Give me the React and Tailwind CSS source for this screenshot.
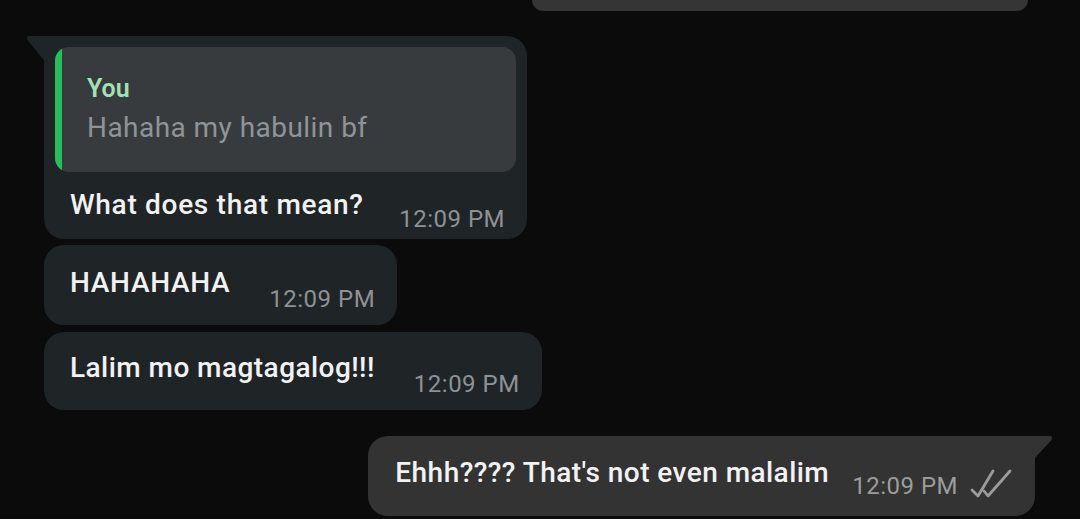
import React from 'react';

const font = { fontFamily: 'Roboto, "Noto Sans", sans-serif' };

const DoubleTick = () => (
  <svg width="42" height="30" viewBox="0 0 42 30" fill="none" className="ml-[12px] mb-[2px]">
    <path d="M2 22 L8 28 L23 3" stroke="#9c9c9c" strokeWidth="2.8" strokeLinecap="round" strokeLinejoin="round" />
    <path d="M14 23 L18 28 L40 3" stroke="#9c9c9c" strokeWidth="2.8" strokeLinecap="round" strokeLinejoin="round" />
  </svg>
);

// tail pointing up-left for incoming bubbles
const InTail = () => (
  <svg width="20" height="28" viewBox="0 0 20 28" className="absolute -left-[18px] top-0">
    <path d="M3 0 H20 V27 L1.5 4 Q0 0 3 0 Z" fill="#1f2427" />
  </svg>
);

const OutTail = () => (
  <svg width="20" height="28" viewBox="0 0 20 28" className="absolute -right-[18px] top-0">
    <path d="M17 0 H0 V24 L18.5 4 Q20 0 17 0 Z" fill="#333333" />
  </svg>
);

const Time = ({ out }) => (
  <span className={`text-[24px] leading-[28px] tracking-[0.5px] whitespace-nowrap ${out ? 'text-[#9c9c9c]' : 'text-[#8d9295]'}`}>
    12:09 PM
  </span>
);

export default function App() {
  return (
    <div className="w-full h-[519px] bg-[#0b0b0b] overflow-hidden flex flex-col" style={font}>
      {/* bottom of the previous outgoing message */}
      <div className="self-end mr-[52px] w-[496px] h-[11px] bg-[#353535] rounded-b-[20px]" />

      {/* reply bubble */}
      <div className="relative ml-[44px] mt-[25px] w-[483px] bg-[#1f2427] rounded-[20px] rounded-tl-none p-[11px] pb-[5px]">
        <InTail />
        <div className="flex h-[125px] bg-[#373b3e] rounded-[14px] overflow-hidden">
          <div className="w-[7px] bg-[#25c05a]" />
          <div className="pl-[25px] pt-[27px]">
            <div className="text-[25px] leading-[30px] font-semibold text-[#a3e2b5]">You</div>
            <div className="mt-[8px] text-[28px] leading-[32px] tracking-[0.45px] text-[#8f9498]">Hahaha my habulin bf</div>
          </div>
        </div>
        <div className="flex items-end pl-[15px] pr-[11px] mt-[17px]">
          <span className="text-[28px] leading-[32px] tracking-[0.7px] font-medium text-[#f2f2f2] mb-[13px]">What does that mean?</span>
          <span className="ml-auto"><Time /></span>
        </div>
      </div>

      <div className="self-start ml-[44px] mt-[6px] bg-[#1f2427] rounded-[20px] flex items-end pl-[26px] pr-[22px] pt-[22px] pb-[11px]">
        <span className="text-[28px] leading-[32px] tracking-[0.7px] font-medium text-[#f2f2f2] mb-[15px]">HAHAHAHA</span>
        <span className="ml-[39px]"><Time /></span>
      </div>

      <div className="self-start ml-[44px] mt-[7px] bg-[#1f2427] rounded-[20px] flex items-end pl-[26px] pr-[22px] pt-[20px] pb-[11px]">
        <span className="text-[28px] leading-[32px] tracking-[0.45px] font-medium text-[#f2f2f2] mb-[15px]">Lalim mo magtagalog!!!</span>
        <span className="ml-[39px]"><Time /></span>
      </div>

      <div className="relative self-end mr-[45px] mt-[26px] bg-[#333333] rounded-[20px] rounded-tr-none flex items-end pl-[27px] pr-[23px] pt-[21px] pb-[16px]">
        <OutTail />
        <span className="text-[28px] leading-[32px] tracking-[0.45px] font-medium text-[#f2f2f2] mb-[11px]">Ehhh???? That's not even malalim</span>
        <span className="ml-[23px] flex items-end">
          <Time out />
          <DoubleTick />
        </span>
      </div>
    </div>
  );
}
